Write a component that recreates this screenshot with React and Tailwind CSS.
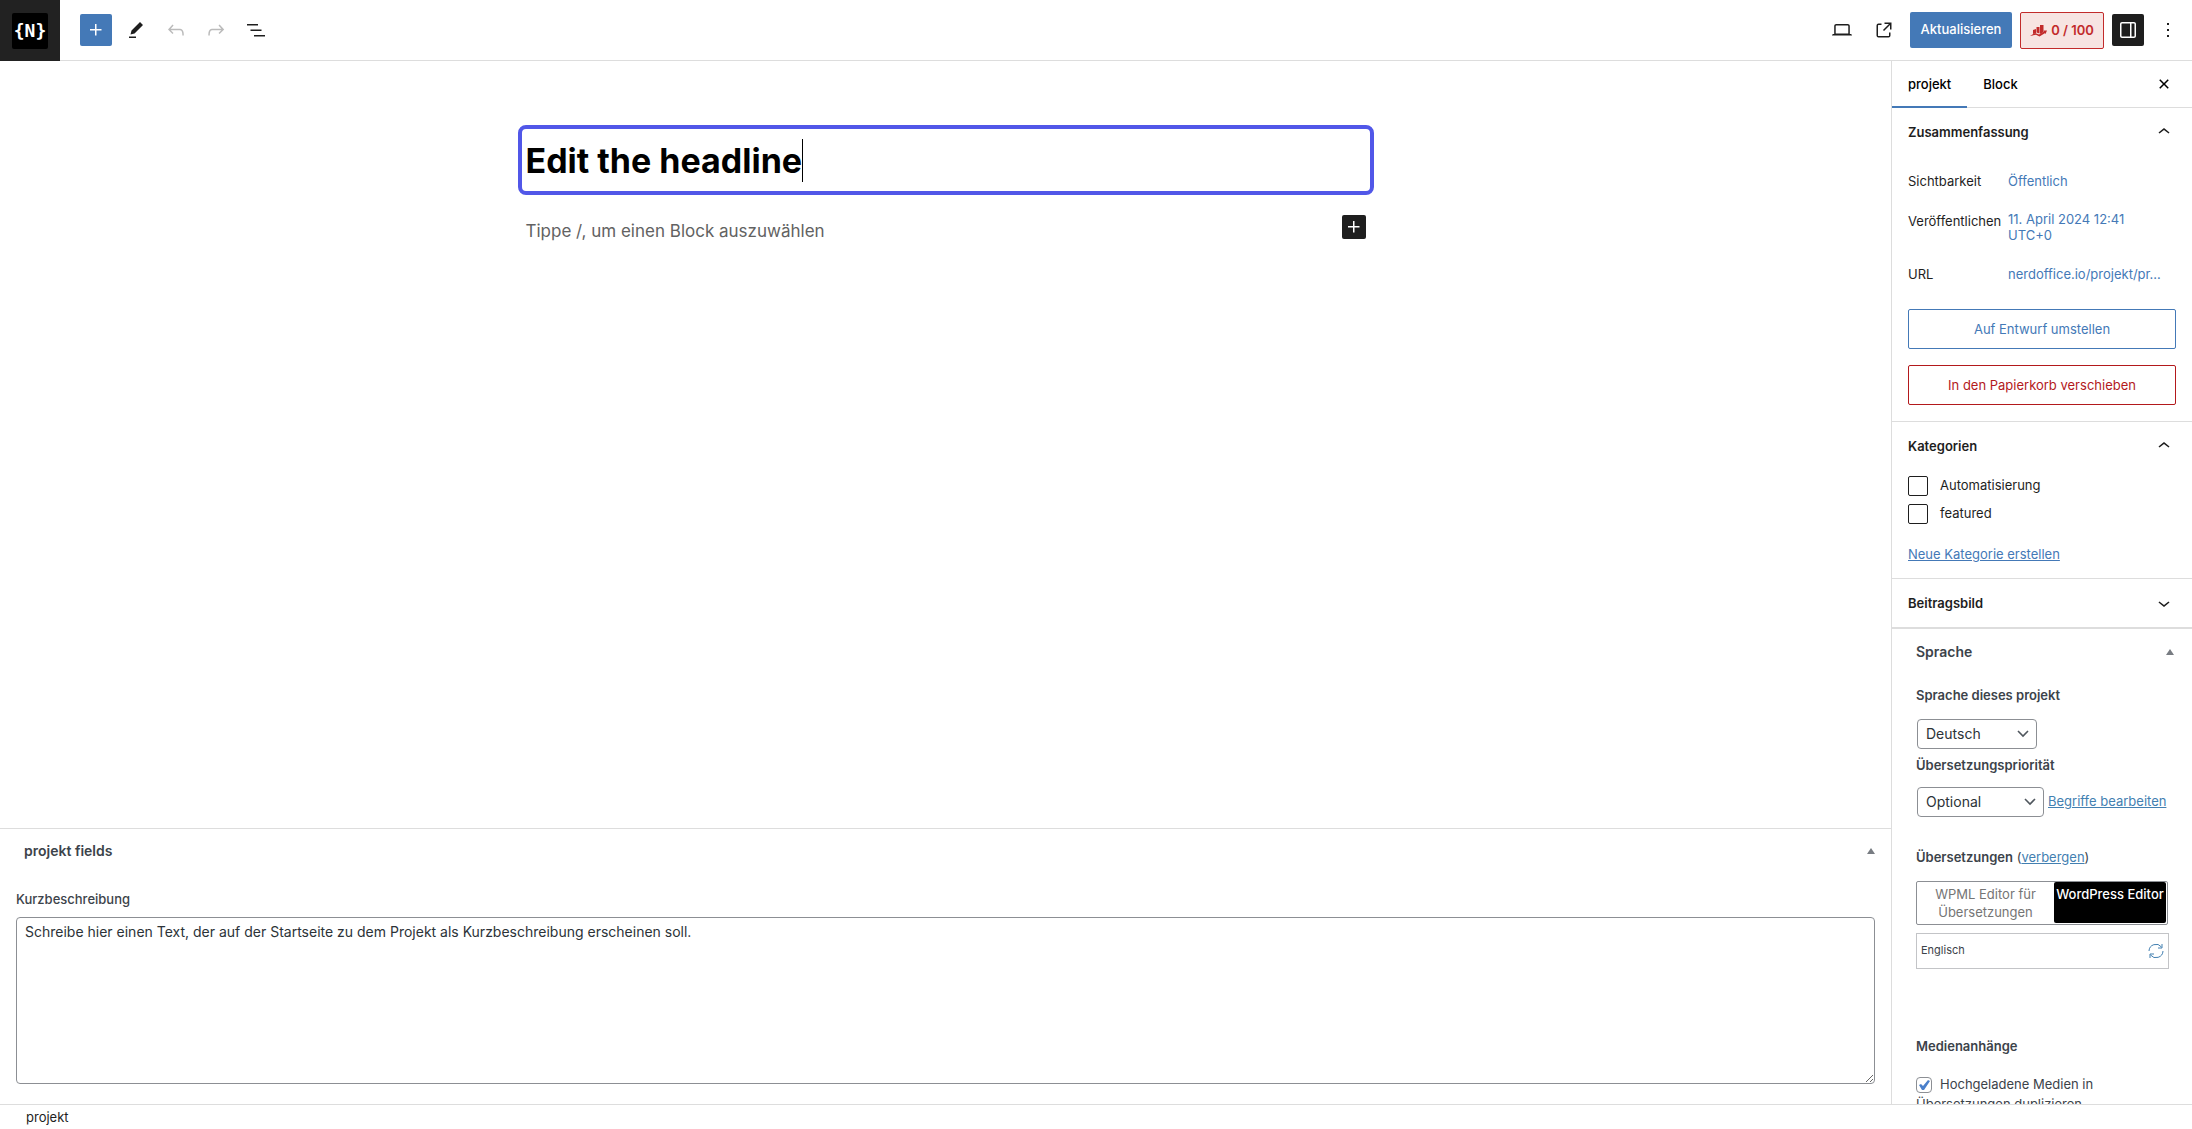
import React from "react";

const icons = {
  plus: "M11 12.5V17.5H12.5V12.5H17.5V11H12.5V6H11V11H6V12.5H11Z",
  edit: "m19 7-3-3-8.5 8.5-1 4 4-1L19 7Zm-7 11.5H5V20h7v-1.5Z",
  undo: "M18.3 11.7c-.6-.6-1.4-.9-2.3-.9H6.7l2.9-3.3-1.1-1-4.5 5L8.5 16l1-1-2.7-2.7H16c.5 0 .9.2 1.3.5 1 1 1 3.4 1 4.5v.3h1.5v-.2c0-1.5 0-4.3-1.5-5.7z",
  redo: "M15.6 6.5l-1.1 1 2.9 3.3H8c-.9 0-1.7.3-2.3.9-1.4 1.5-1.4 4.2-1.4 5.6v.2h1.5v-.3c0-1.1 0-3.5 1-4.5.3-.3.7-.5 1.3-.5h9.2L14.5 15l1.1 1.1 4.6-4.6-4.6-5z",
  list: "M3 6h11v1.5H3V6Zm3.5 5.5h11V13h-11v-1.5ZM21 17H10v1.5h11V17Z",
  desktop:
    "M20.5 16h-.7V8c0-1.1-.9-2-2-2H6.2c-1.1 0-2 .9-2 2v8h-.7c-.8 0-1.5.7-1.5 1.5h20c0-.8-.7-1.5-1.5-1.5zM5.7 8c0-.3.2-.5.5-.5h11.6c.3 0 .5.2.5.5v7.6H5.7V8z",
  external:
    "M19.5 4.5h-7V6h4.44l-5.97 5.97 1.06 1.06L18 7.06v4.44h1.5v-7Zm-13 1a2 2 0 0 0-2 2v10a2 2 0 0 0 2 2h10a2 2 0 0 0 2-2v-3H17v3a.5.5 0 0 1-.5.5h-10a.5.5 0 0 1-.5-.5v-10a.5.5 0 0 1 .5-.5h3V5.5h-3Z",
  drawer:
    "M18 4H6c-1.1 0-2 .9-2 2v12c0 1.1.9 2 2 2h12c1.1 0 2-.9 2-2V6c0-1.1-.9-2-2-2zm-4 14.5H6c-.3 0-.5-.2-.5-.5V6c0-.3.2-.5.5-.5h8v13zm4.5-.5c0 .3-.2.5-.5.5h-2.5v-13H18c.3 0 .5.2.5.5v12z",
  more: "M13 19h-2v-2h2v2zm0-6h-2v-2h2v2zm0-6h-2V5h2v2z",
  close:
    "M12 13.06l3.712 3.713 1.061-1.06L13.061 12l3.712-3.712-1.06-1.06L12 10.938 8.288 7.227l-1.061 1.06L10.939 12l-3.712 3.712 1.06 1.061L12 13.061z",
  up: "M6.5 12.4L12 8l5.5 4.4-.9 1.2L12 10l-4.5 3.6-1-1.2z",
  down: "M17.5 11.6L12 16l-5.5-4.4.9-1.2L12 14l4.5-3.6 1 1.2z",
};

const Icon = ({ name, className = "size-6" }) => (
  <svg viewBox="0 0 24 24" className={`${className} shrink-0`} fill="currentColor" aria-hidden="true">
    <path d={icons[name]} />
  </svg>
);

const IconButton = ({ name, label, className = "" }) => (
  <button aria-label={label} className={`flex size-8 items-center justify-center rounded-xs ${className}`}>
    <Icon name={name} />
  </button>
);

const Triangle = () => (
  <svg viewBox="0 0 8 6" className="h-1.5 w-2" fill="#787c82" aria-hidden="true">
    <path d="M4 0l4 6H0z" />
  </svg>
);

const Header = () => (
  <header className="flex h-[61px] shrink-0 border-b border-[#ddd]">
    <a href="#" aria-label="nerdoffice" className="-mb-px flex w-[60px] items-center justify-center bg-[#222]">
      <span className="flex size-9 items-center justify-center rounded-xs bg-black font-['DejaVu_Sans_Mono',monospace] text-lg leading-none font-bold text-white">
        {"{N}"}
      </span>
    </a>
    <div className="flex flex-1 items-center justify-between pr-2 pl-5">
      <div className="flex items-center gap-2">
        <IconButton name="plus" label="Block-Inserter umschalten" className="bg-[#4479b7] text-white" />
        <IconButton name="edit" label="Werkzeuge" />
        <IconButton name="undo" label="Rückgängig" className="text-[#bbb]" />
        <IconButton name="redo" label="Wiederholen" className="text-[#bbb]" />
        <IconButton name="list" label="Dokumentübersicht" />
      </div>
      <div className="flex items-center gap-2">
        <div className="flex gap-2.5">
          <IconButton name="desktop" label="Ansicht" />
          <IconButton name="external" label="Vorschau" />
        </div>
        <button className="ml-0.5 h-9 w-[102px] rounded-xs bg-[#4479b7] font-medium text-white">Aktualisieren</button>
        <button className="flex h-[37px] w-[84px] items-center justify-center gap-1 rounded-xs border border-[#c22b2b] bg-[#f7e4e2] pt-0.5 font-semibold text-[#c22b2b]">
          <svg viewBox="0 0 17 12" className="h-3 w-[17px]" fill="currentColor" aria-hidden="true">
            <path d="M3 5l3-1v4l-3 1zM6.500 2h3v6.500l-3-1zM10 0h3.500v7L10 9z" />
            <path d="M0 11l5-3 4 1.500 5-3-.5-1H17l-1.500 3.500-.7-.8L9.500 11.500 6 9.800z" />
          </svg>
          0 / 100
        </button>
        <IconButton name="drawer" label="Einstellungen" className="bg-[#1e1e1e] text-white" />
        <IconButton name="more" label="Optionen" />
      </div>
    </div>
  </header>
);

const Canvas = () => (
  <section className="flex-1 px-4 pt-16">
    <div className="mx-auto max-w-[856px]">
      <div className="flex h-[70px] items-center rounded-lg border-4 border-[#5157e8] px-1">
        <input
          aria-label="Titel"
          defaultValue="Edit the headline"
          className="field-sizing-content text-[34px] font-bold text-black outline-none"
        />
        <span className="h-[43px] w-px bg-black" />
      </div>
      <div className="flex items-start justify-between px-2 pt-5">
        <p className="pt-0.5 text-[17px] leading-7 text-[#626262]">Tippe /, um einen Block auszuwählen</p>
        <button aria-label="Block hinzufügen" className="flex size-6 items-center justify-center rounded-xs bg-[#1e1e1e] text-white">
          <Icon name="plus" />
        </button>
      </div>
    </div>
  </section>
);

const MetaBox = () => (
  <section className="shrink-0 border-t border-[#ddd] px-4 pb-5 text-[#3c434a]">
    <div className="flex h-11 items-center justify-between pl-2">
      <h2 className="text-sm font-semibold">projekt fields</h2>
      <button aria-label="Bereich umschalten" className="-mr-2 p-2">
        <Triangle />
      </button>
    </div>
    <label htmlFor="kurz" className="mt-4 mb-2 block leading-5 font-medium">
      Kurzbeschreibung
    </label>
    <textarea
      id="kurz"
      className="block h-[167px] w-full resize rounded-sm border border-[#8c8f94] px-2 py-1 text-sm text-[#2c3338]"
      defaultValue="Schreibe hier einen Text, der auf der Startseite zu dem Projekt als Kurzbeschreibung erscheinen soll."
    />
  </section>
);

const PanelTitle = ({ children, open }) => (
  <h2>
    <button className="flex h-12 w-full items-center justify-between px-4 text-left font-semibold">
      <span className="pt-0.5">{children}</span>
      <Icon name={open ? "up" : "down"} />
    </button>
  </h2>
);

const Summary = () => (
  <section className="border-b border-[#ddd] pb-4">
    <PanelTitle open>Zusammenfassung</PanelTitle>
    <div className="px-4">
      <dl className="grid grid-cols-[92px_1fr] gap-x-2 pt-2">
        <dt className="flex h-9 items-center">Sichtbarkeit</dt>
        <dd className="flex h-9 items-center">
          <button className="text-[#4479b7]">Öffentlich</button>
        </dd>
        <dt className="pt-3">Veröffentlichen</dt>
        <dd className="py-[11px]">
          <button className="w-32 text-left leading-4 text-[#4479b7]">11. April 2024 12:41 UTC+0</button>
        </dd>
        <dt className="flex h-9 items-center">URL</dt>
        <dd className="flex h-9 items-center">
          <a href="#" className="text-[#4479b7]">
            nerdoffice.io/projekt/pr…
          </a>
        </dd>
      </dl>
      <button className="mt-4 h-10 w-full rounded-xs border border-[#4479b7] pt-0.5 text-[#4479b7]">Auf Entwurf umstellen</button>
      <button className="mt-4 h-10 w-full rounded-xs border border-[#b3191c] pt-0.5 text-[#b3191c]">In den Papierkorb verschieben</button>
    </div>
  </section>
);

const Categories = () => (
  <section className="border-b border-[#ddd] pb-3.5">
    <PanelTitle open>Kategorien</PanelTitle>
    <div className="space-y-2 px-4 pt-1.5">
      {["Automatisierung", "featured"].map((name) => (
        <label key={name} className="flex h-5 items-center gap-3">
          <input type="checkbox" className="size-5 appearance-none rounded-xs border border-[#1e1e1e]" />
          {name}
        </label>
      ))}
    </div>
    <a href="#" className="mx-4 mt-5 block leading-5 text-[#4479b7] underline">
      Neue Kategorie erstellen
    </a>
  </section>
);

const Select = ({ id, value, className }) => (
  <div className={`relative ${className}`}>
    <select id={id} className="h-[30px] w-full appearance-none rounded-sm border border-[#8c8f94] px-2 text-sm text-[#2c3338]">
      <option>{value}</option>
    </select>
    <svg viewBox="0 0 12 8" className="pointer-events-none absolute top-[11px] right-2 h-2 w-3" fill="none" stroke="#50575e" strokeWidth="1.6" aria-hidden="true">
      <path d="M1 1l5 5 5-5" />
    </svg>
  </div>
);

const Language = () => (
  <section className="pl-6 text-[#3c434a]">
    <div className="flex h-[46px] items-center justify-between pr-[18px]">
      <h2 className="text-sm font-semibold">Sprache</h2>
      <Triangle />
    </div>
    <label htmlFor="lang" className="mt-2.5 block leading-5 font-semibold">
      Sprache dieses projekt
    </label>
    <Select id="lang" value="Deutsch" className="mt-3.5 ml-px w-[120px]" />
    <label htmlFor="prio" className="mt-1.5 block leading-5 font-semibold">
      Übersetzungspriorität
    </label>
    <div className="mt-3 flex items-center gap-1">
      <Select id="prio" value="Optional" className="ml-px w-[127px]" />
      <a href="#" className="text-[#4380b1] underline">
        Begriffe bearbeiten
      </a>
    </div>
    <p className="mt-[30px] leading-5">
      <strong className="font-semibold">Übersetzungen</strong> (
      <a href="#" className="text-[#4380b1] underline">
        verbergen
      </a>
      )
    </p>
    <div className="mt-3.5 mr-6 flex h-11 rounded-xs border border-[#8c8f94] text-center leading-[18px]">
      <button className="flex-1 text-[#757575]">WPML Editor für Übersetzungen</button>
      <button className="mr-px mb-px flex w-28 justify-center rounded-xs bg-black pt-[3px] font-medium whitespace-nowrap text-white">WordPress Editor</button>
    </div>
    <div className="mt-2 mr-[23px] flex h-9 items-center justify-between border border-[#c3c4c7] px-1 text-[11px]">
      Englisch
      <svg viewBox="0 0 16 16" className="size-4" fill="none" stroke="#4380b1" aria-hidden="true">
        <path d="M1 8a7 7 0 0 1 12.500-4M15 8a7 7 0 0 1-12.500 4M14 1v4h-4M2 15v-4h4" />
      </svg>
    </div>
    <h3 className="mt-[67px] leading-5 font-semibold">Medienanhänge</h3>
    <label className="mt-[18px] block w-48 leading-5">
      <span className="relative mr-2 inline-block size-4 align-middle">
        <input type="checkbox" defaultChecked className="block size-4 appearance-none rounded-sm border border-[#8c8f94]" />
        <svg viewBox="0 0 16 16" className="pointer-events-none absolute inset-0 size-4" fill="#4a7fcb" aria-hidden="true">
          <path d="M3 8l2-1 2 2 5-6 2 1-6 9H6z" />
        </svg>
      </span>
      Hochgeladene Medien in Übersetzungen duplizieren
    </label>
  </section>
);

const Sidebar = () => (
  <aside className="w-[301px] shrink-0 overflow-hidden border-l border-[#ddd]">
    <div className="flex h-[47px] items-stretch border-b border-[#ddd] pr-3 font-medium text-black">
      <button className="-mb-px border-b-2 border-[#4479b7] px-4 pt-0.5">projekt</button>
      <button className="px-4 pt-0.5">Block</button>
      <button aria-label="Einstellungen schließen" className="ml-auto flex w-8 items-center justify-center">
        <Icon name="close" />
      </button>
    </div>
    <Summary />
    <Categories />
    <section className="border-b-2 border-[#ddd]">
      <PanelTitle>Beitragsbild</PanelTitle>
    </section>
    <Language />
  </aside>
);

export default function App() {
  return (
    <div className="flex h-screen flex-col bg-white font-[Inter,sans-serif] text-[13px] text-[#1e1e1e]">
      <Header />
      <div className="flex min-h-0 flex-1">
        <main className="flex min-w-0 flex-1 flex-col">
          <Canvas />
          <MetaBox />
        </main>
        <Sidebar />
      </div>
      <footer className="flex h-[25px] shrink-0 items-center border-t border-[#ddd] px-6.5 pt-0.5">projekt</footer>
    </div>
  );
}
